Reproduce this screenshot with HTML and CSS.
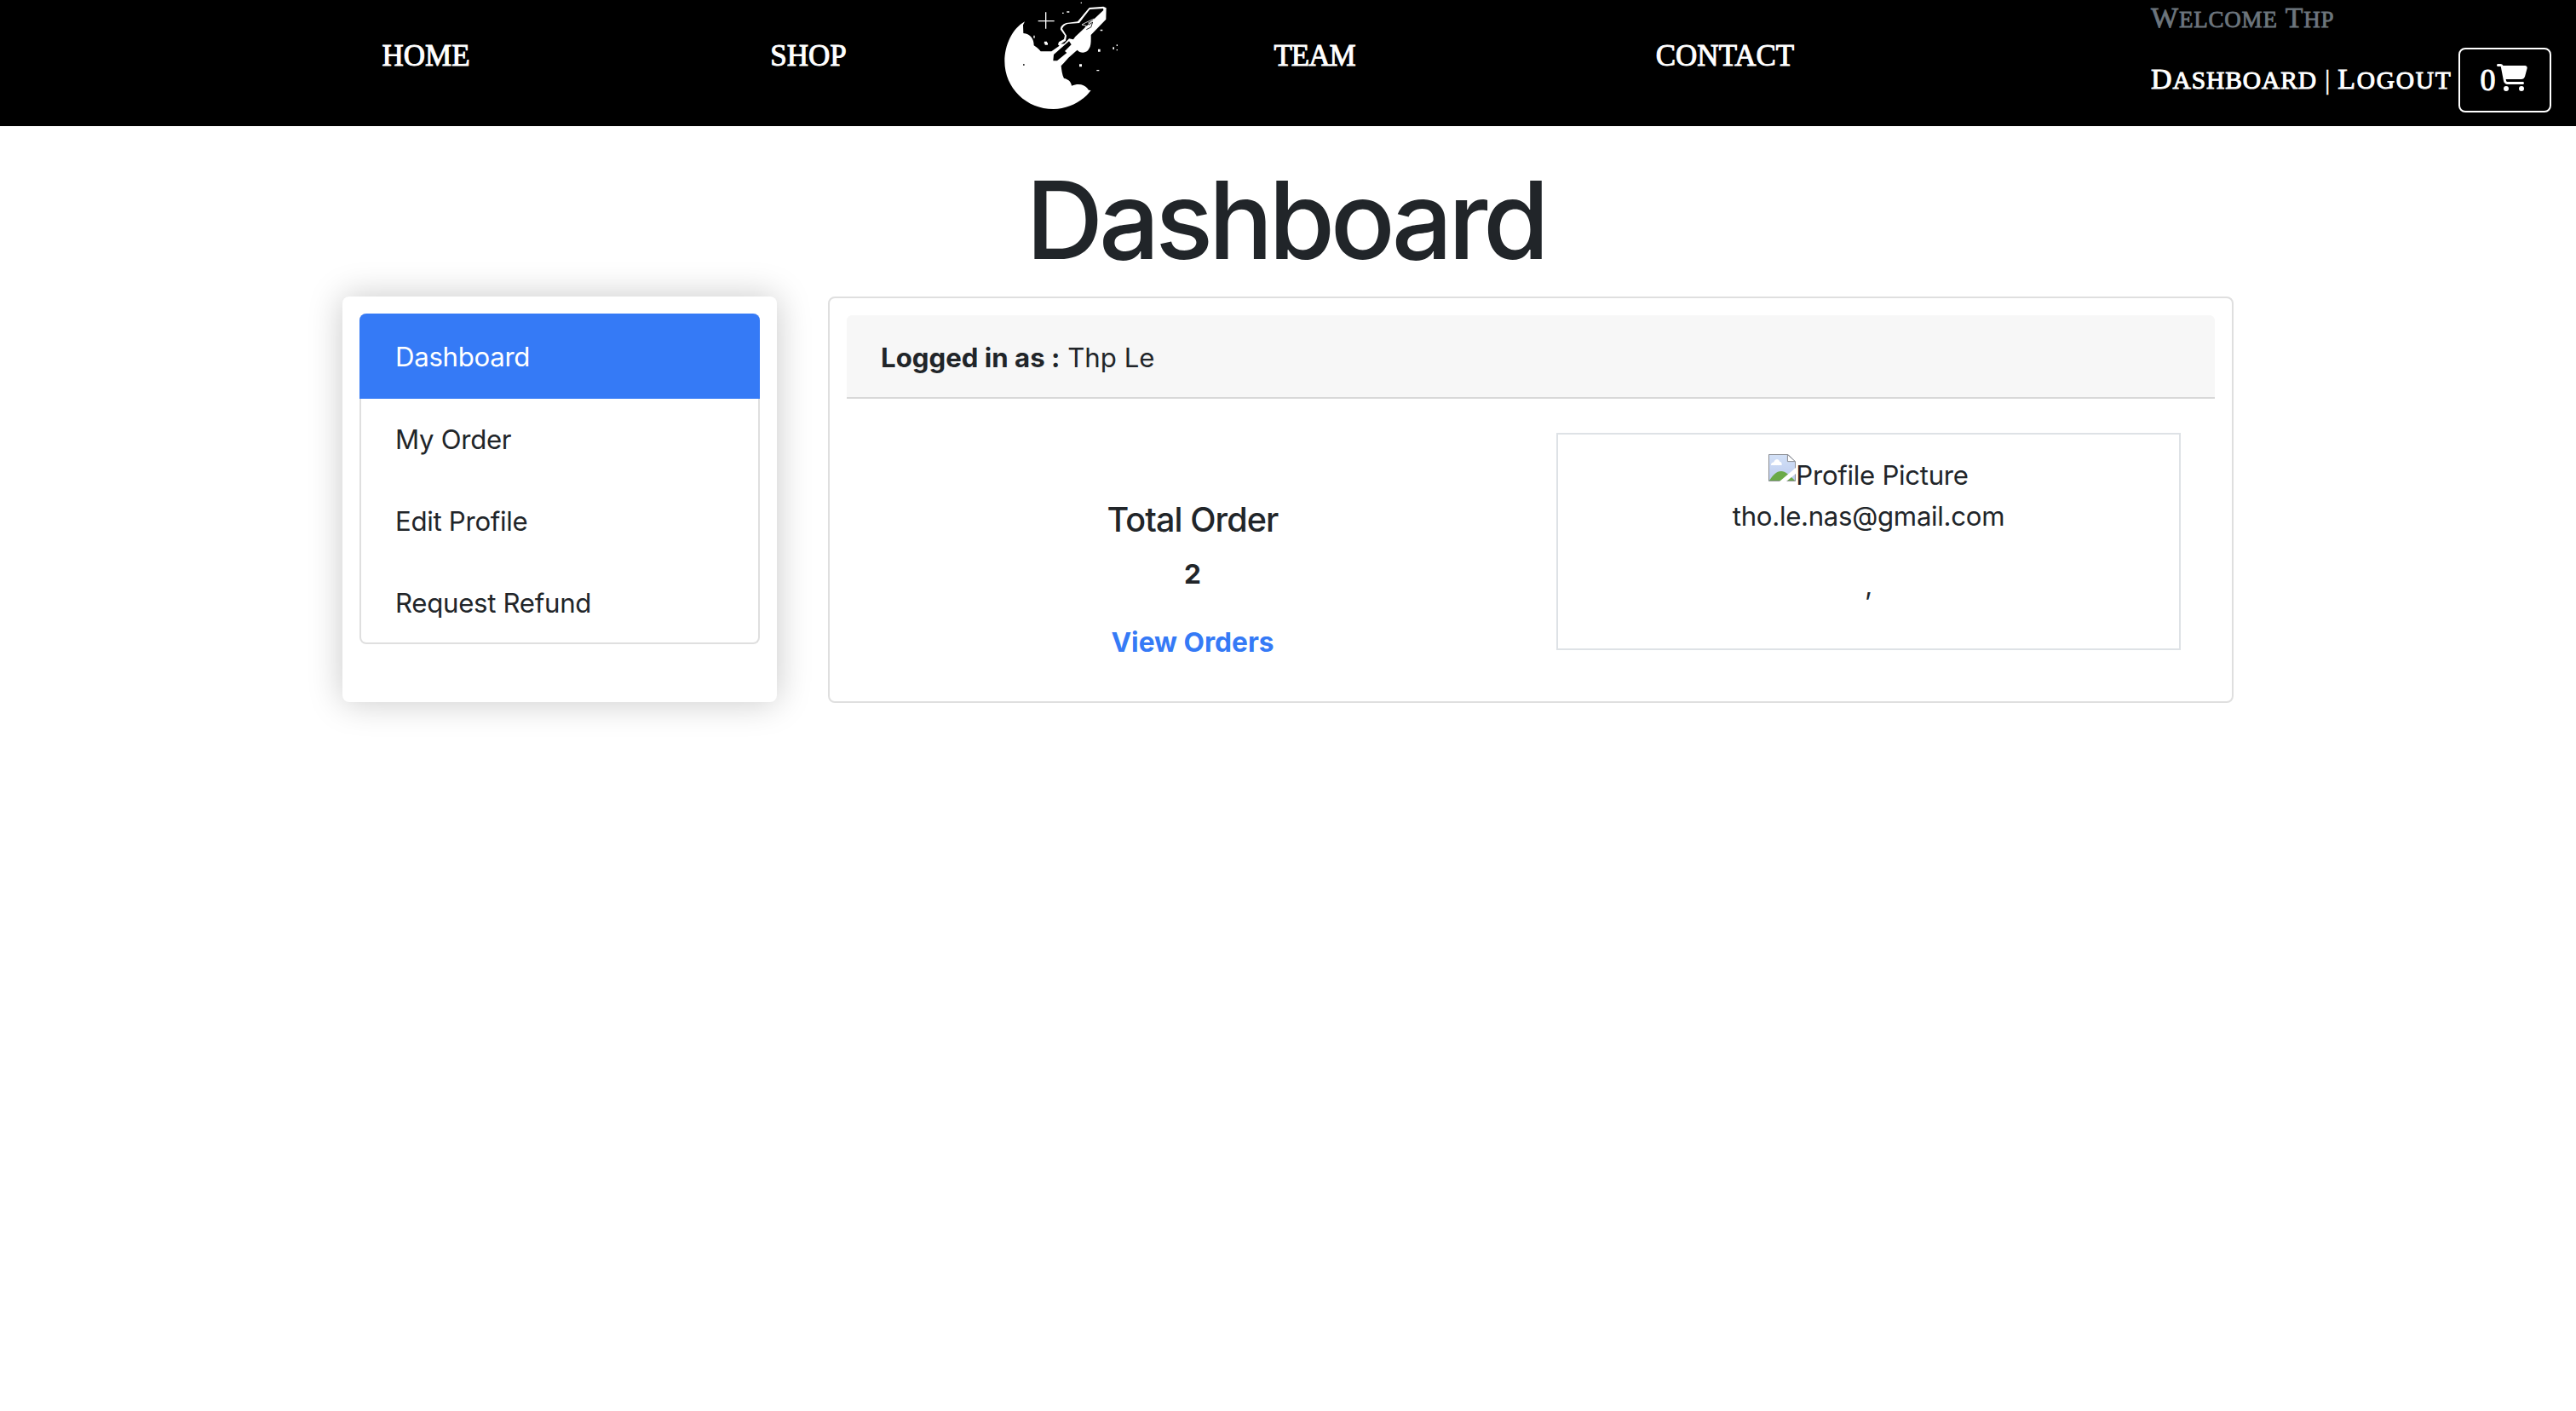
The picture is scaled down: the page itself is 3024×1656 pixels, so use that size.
FILE: index.html
```html
<!DOCTYPE html>
<html lang="en">
<head>
<meta charset="utf-8">
<title>Dashboard</title>
<link rel="stylesheet" href="styles.css">
</head>
<body>
<header class="navbar">
  <nav class="nav">
    <a class="nav-link" href="#"><span>HOME</span></a>
    <a class="nav-link" href="#"><span>SHOP</span></a>
    <svg class="logo" viewBox="72 0 384 444" fill="#fff" aria-label="Logo">
      <path d="M159 76 C115 100 88 160 88 215 C88 310 165 384 260 384 C315 384 365 355 392 318 L384 317 C372 298 350 292 324 302 C322 286 310 278 297 276 C290 262 289 248 287 232 L297 221 L313 203 C325 193 334 184 344 176 C352 187 377 190 385 172 C393 160 392 145 392 123 L445 68 L446 28 L436 23 L386 27 L345 76 L305 81 C290 86 283 95 285 104 L300 125 L297 138 L279 148 L276 157 L281 161 L253 181 L215 181 C208 172 197 164 191 160 C191 138 180 119 154 117 L153 88 Z"/>
      <path fill="#000" d="M388 33 L435 30 L436 36 L370 98 L337 129 L330 139 L315 136 L298 154 L286 155 L303 143 L306 125 L291 101 C295 91 302 87 311 84 L351 81 Z M315 145 L323 157 L300 180 L307 186 L273 214 L259 214 L261 192 Z"/>
      <path fill="none" stroke="#fff" stroke-width="2.5" d="M403 66 L373 80 L360 87 L376 91 L370 102 L393 86 L383 81 L405 69"/>
      <path fill="none" stroke="#000" stroke-width="2.5" d="M384 88 L398 78 L392 96 L376 104"/>
      <path fill="none" stroke="#fff" stroke-width="4" d="M233 43 V101 M206 74 H263"/>
      <path d="M228 146h9v4h3v8h-10v-4h-3zM190 125h4v9h-4zM291 44h5v4h-5zM307 40h9v4h-9zM356 8h4v4h-4zM425 104h8v5h-8zM417 173h8v9h-8zM351 226h9v9h-9zM412 246h9v4h-9zM469 166h5v8h-5zM482 157h4v5h-4zM482 174h4v4h-4z"/>
      <path fill="#000" d="M153 226h5v4h-5z"/>
    </svg>
    <a class="nav-link" href="#"><span class="tight">TEAM</span></a>
    <a class="nav-link" href="#"><span>CONTACT</span></a>
  </nav>
  <div class="user">
    <div class="welcome"><span class="sc">Welcome</span> <span class="sc">Thp</span></div>
    <div class="account">
      <a class="sc" href="#">Dashboard</a><span class="bar">|</span><a class="sc logout" href="#">Logout</a>
      <a class="cart" href="#"><span>0</span><svg class="cart-icon" viewBox="0 0 576 512" fill="#fff"><path d="M0 24C0 10.700 10.700 0 24 0H69.500c22 0 41.500 12.800 50.600 32h411c26.300 0 45.500 25 38.600 50.400l-41 152.300c-8.500 31.400-37 53.300-69.500 53.300H170.700l5.400 28.500c2.200 11.300 12.100 19.500 23.600 19.500H488c13.300 0 24 10.700 24 24s-10.700 24-24 24H199.700c-34.600 0-64.300-24.600-70.700-58.500L77.400 54.500c-.7-3.800-4-6.500-7.900-6.500H24C10.700 48 0 37.300 0 24zM128 464a48 48 0 1 1 96 0 48 48 0 1 1-96 0zm336-48a48 48 0 1 1 0 96 48 48 0 1 1 0-96z"/></svg></a>
    </div>
  </div>
</header>
<main class="container">
  <h1 class="title">Dashboard</h1>
  <div class="columns">
    <aside class="side-card">
      <ul class="menu">
        <li class="active">Dashboard</li>
        <li>My Order</li>
        <li>Edit Profile</li>
        <li>Request Refund</li>
      </ul>
    </aside>
    <section class="card">
      <div class="card-header"><b>Logged in as :</b> <span>Thp Le</span></div>
      <div class="card-body">
        <div class="orders">
          <h4>Total Order</h4>
          <div class="count">2</div>
          <a class="view" href="#">View Orders</a>
        </div>
        <div class="profile">
          <div class="picture">
            <svg class="broken" viewBox="0 0 16 16"><defs><linearGradient id="sky" x2="0" y2="1"><stop stop-color="#d3e1f7"/><stop offset="1" stop-color="#bccbee"/></linearGradient></defs><path fill="url(#sky)" d="M0 0H11.500L16 4.500V16H0Z"/><path fill="#fff" d="M1.500 6.500C1.500 5 2.500 5 3.200 4.600C4 2.500 6 2.500 6.600 4.400C7.700 4.600 8 5.500 7.800 6.500Z"/><path fill="#6aaa48" d="M.5 15.500C3 12 4.500 10 7.500 10C10 10 12 12 15.500 15.500Z"/><path fill="none" stroke="#8d8f94" stroke-width=".5" d="M.25 15.750V.25H11.500L15.750 4.500V15.750Z"/><path fill="#fff" stroke="#8d8f94" stroke-width=".5" d="M11.200.3V4.300H15.700Z"/><path fill="#fff" d="M16 8V11.500L10.500 16H6.500Z"/></svg><span>Profile Picture</span>
          </div>
          <div class="email">tho.le.nas@gmail.com</div>
          <div class="address">,</div>
        </div>
      </div>
    </section>
  </div>
</main>
</body>
</html>
```
FILE: styles.css
```css
* { box-sizing: border-box; }
body { margin: 0; min-height: 100vh; background: #fff; color: #212529; font: 31.2px/48px Inter, sans-serif; }
a { text-decoration: none; color: inherit; }
h1, h4, ul { margin: 0; padding: 0; }
h1, h4 { font-weight: 500; }

.navbar { display: flex; height: 148px; background: #000; color: #fff; font-family: "Liberation Serif", serif; -webkit-text-stroke: 1px currentColor; }
.nav { display: grid; grid-template-columns: 448px 450px 128px 482px 482px; padding-left: 276px; }
.nav-link { display: flex; justify-content: center; padding-top: 42px; font-size: 35px; }
.tight { letter-spacing: -1px; }
.logo { width: 128px; height: 148px; overflow: visible; }
.user { margin-left: 259px; white-space: nowrap; }
.welcome { display: flex; gap: 9px; height: 56px; color: #6c757d; font-size: 27px; line-height: 41px; letter-spacing: .8px; -webkit-text-stroke-width: .8px; }
.sc { display: block; text-transform: uppercase; }
.sc::first-letter { font-size: 34px; }
.account { display: flex; font-size: 29.5px; line-height: 74px; letter-spacing: .9px; }
.logout { letter-spacing: 1.7px; }
.bar { font-size: 32px; margin: 0 9px; letter-spacing: 0; -webkit-text-stroke-width: .4px; }
.cart { display: flex; align-items: center; width: 109px; height: 76px; margin-left: 7px; padding-left: 24px; border: 2px solid #fff; border-radius: 8px; font-size: 36px; letter-spacing: 0; }
.cart-icon { width: 36px; height: 32px; margin: 0 0 6px 1px; }

.container { width: 2220px; margin: 0 auto; }
.title { height: 200px; padding: 34px 6px 0 0; text-align: center; font-size: 126px; line-height: 152px; letter-spacing: -5.3px; }
.columns { display: grid; grid-template-columns: 510px 1650px; gap: 60px; height: 477px; }
.side-card { height: 476px; padding: 20px; border-radius: 8px; background: #fff; box-shadow: 0 0 40px rgba(0, 0, 0, .22); }
.menu { list-style: none; border: 2px solid #dfdfdf; border-top: 0; border-radius: 8px; height: 388px; letter-spacing: -.3px; }
.menu li { height: 96px; padding: 24px 40px; }
.menu .active { height: 100px; margin: 0 -2px; padding: 27px 42px; border-radius: 8px 8px 0 0; background: #357af6; color: #fff; }
.card { height: 477px; padding: 20px 20px 0; border: 2px solid #dfdfdf; border-radius: 8px; }
.card-header { height: 98px; padding: 26px 40px; border-bottom: 2px solid #d8d8d8; border-radius: 6px 6px 0 0; background: #f7f7f7; }
.card-body { display: flex; padding: 40px 40px 0; }
.orders { width: 732px; margin-right: 61px; padding-top: 78px; text-align: center; font-size: 31.7px; font-weight: 700; }
.orders h4 { font-size: 39.5px; height: 64px; letter-spacing: -.9px; }
.count { height: 80px; }
.view { color: #357af6; }
.profile { width: 733px; height: 255px; padding-top: 24px; border: 2px solid #dee2e6; text-align: center; letter-spacing: -.3px; }
.picture { display: flex; justify-content: center; }
.broken { width: 32px; height: 32px; margin-top: -1px; }
.address { padding-top: 33px; }
```
